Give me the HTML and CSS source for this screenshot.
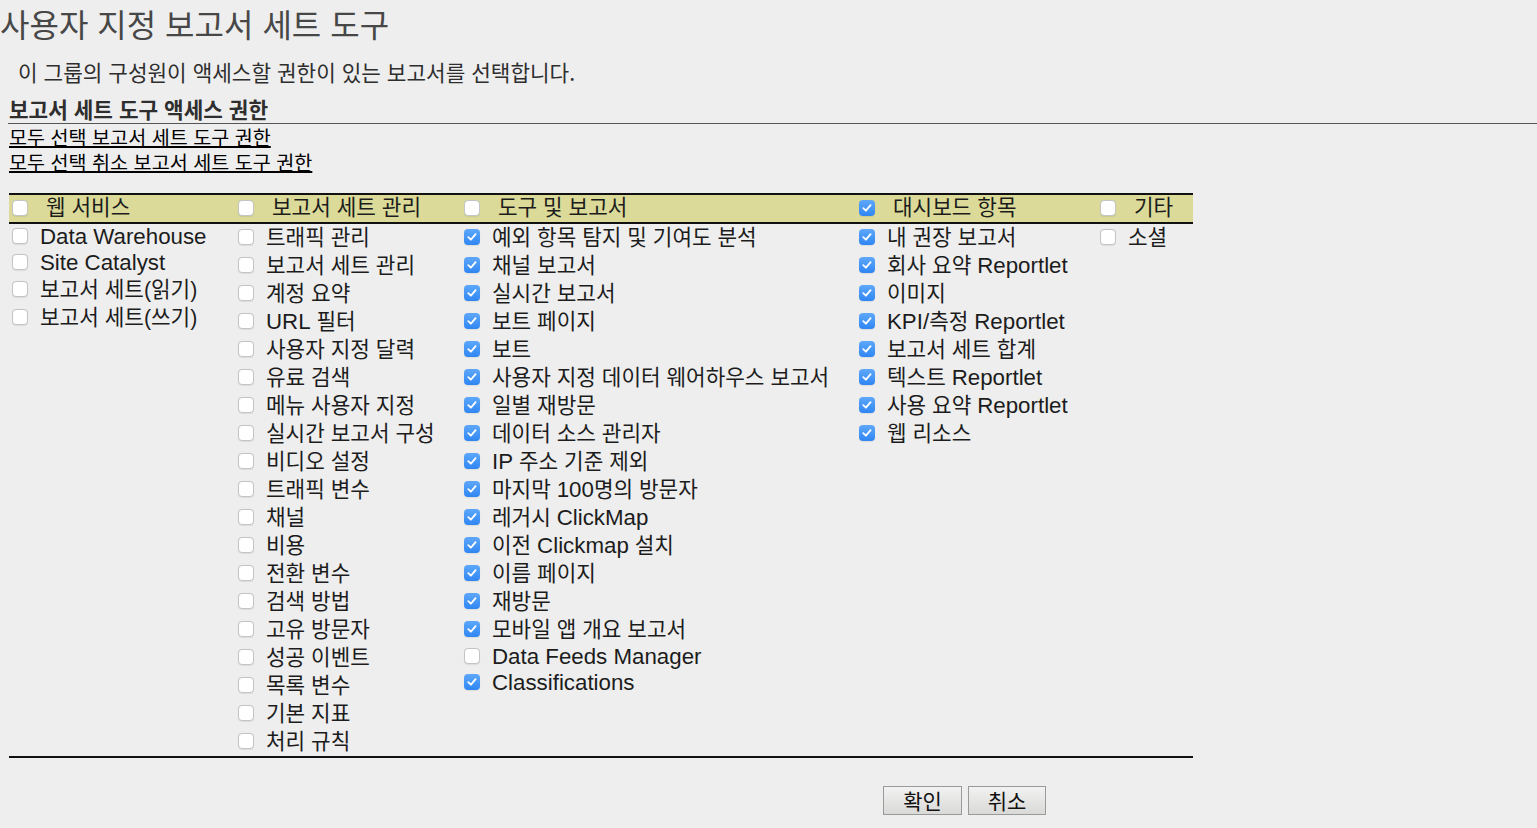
FILE: index.html
```html
<!DOCTYPE html>
<html lang="ko">
<head>
<meta charset="utf-8">
<title>사용자 지정 보고서 세트 도구</title>
<link rel="stylesheet" href="styles.css">
</head>
<body>
<h1 class="title">사용자 지정 보고서 세트 도구</h1>
<p class="intro">이 그룹의 구성원이 액세스할 권한이 있는 보고서를 선택합니다.</p>
<div class="section-head">보고서 세트 도구 액세스 권한</div>
<div class="links">
  <a href="#">모두 선택 보고서 세트 도구 권한</a>
  <a href="#">모두 선택 취소 보고서 세트 도구 권한</a>
</div>

<div class="perm-table">
  <div class="thead">
    <div class="hcell"><span class="cb"></span><span>웹 서비스</span></div>
    <div class="hcell"><span class="cb"></span><span>보고서 세트 관리</span></div>
    <div class="hcell"><span class="cb"></span><span>도구 및 보고서</span></div>
    <div class="hcell"><span class="cb on"><svg viewBox="0 0 16 16"><path d="M4.3 8.2 L6.9 10.7 L11.6 5.2"/></svg></span><span>대시보드 항목</span></div>
    <div class="hcell"><span class="cb"></span><span>기타</span></div>
  </div>
  <div class="tbody">
    <div class="col">
      <div class="item lat"><span class="cb"></span><span><span class="en">Data Warehouse</span></span></div>
      <div class="item lat"><span class="cb"></span><span><span class="en">Site Catalyst</span></span></div>
      <div class="item"><span class="cb"></span><span>보고서 세트(읽기)</span></div>
      <div class="item"><span class="cb"></span><span>보고서 세트(쓰기)</span></div>
    </div>
    <div class="col">
      <div class="item"><span class="cb"></span><span>트래픽 관리</span></div>
      <div class="item"><span class="cb"></span><span>보고서 세트 관리</span></div>
      <div class="item"><span class="cb"></span><span>계정 요약</span></div>
      <div class="item"><span class="cb"></span><span><span class="en">URL</span> 필터</span></div>
      <div class="item"><span class="cb"></span><span>사용자 지정 달력</span></div>
      <div class="item"><span class="cb"></span><span>유료 검색</span></div>
      <div class="item"><span class="cb"></span><span>메뉴 사용자 지정</span></div>
      <div class="item"><span class="cb"></span><span>실시간 보고서 구성</span></div>
      <div class="item"><span class="cb"></span><span>비디오 설정</span></div>
      <div class="item"><span class="cb"></span><span>트래픽 변수</span></div>
      <div class="item"><span class="cb"></span><span>채널</span></div>
      <div class="item"><span class="cb"></span><span>비용</span></div>
      <div class="item"><span class="cb"></span><span>전환 변수</span></div>
      <div class="item"><span class="cb"></span><span>검색 방법</span></div>
      <div class="item"><span class="cb"></span><span>고유 방문자</span></div>
      <div class="item"><span class="cb"></span><span>성공 이벤트</span></div>
      <div class="item"><span class="cb"></span><span>목록 변수</span></div>
      <div class="item"><span class="cb"></span><span>기본 지표</span></div>
      <div class="item"><span class="cb"></span><span>처리 규칙</span></div>
    </div>
    <div class="col">
      <div class="item"><span class="cb on"><svg viewBox="0 0 16 16"><path d="M4.3 8.2 L6.9 10.7 L11.6 5.2"/></svg></span><span>예외 항목 탐지 및 기여도 분석</span></div>
      <div class="item"><span class="cb on"><svg viewBox="0 0 16 16"><path d="M4.3 8.2 L6.9 10.7 L11.6 5.2"/></svg></span><span>채널 보고서</span></div>
      <div class="item"><span class="cb on"><svg viewBox="0 0 16 16"><path d="M4.3 8.2 L6.9 10.7 L11.6 5.2"/></svg></span><span>실시간 보고서</span></div>
      <div class="item"><span class="cb on"><svg viewBox="0 0 16 16"><path d="M4.3 8.2 L6.9 10.7 L11.6 5.2"/></svg></span><span>보트 페이지</span></div>
      <div class="item"><span class="cb on"><svg viewBox="0 0 16 16"><path d="M4.3 8.2 L6.9 10.7 L11.6 5.2"/></svg></span><span>보트</span></div>
      <div class="item"><span class="cb on"><svg viewBox="0 0 16 16"><path d="M4.3 8.2 L6.9 10.7 L11.6 5.2"/></svg></span><span>사용자 지정 데이터 웨어하우스 보고서</span></div>
      <div class="item"><span class="cb on"><svg viewBox="0 0 16 16"><path d="M4.3 8.2 L6.9 10.7 L11.6 5.2"/></svg></span><span>일별 재방문</span></div>
      <div class="item"><span class="cb on"><svg viewBox="0 0 16 16"><path d="M4.3 8.2 L6.9 10.7 L11.6 5.2"/></svg></span><span>데이터 소스 관리자</span></div>
      <div class="item"><span class="cb on"><svg viewBox="0 0 16 16"><path d="M4.3 8.2 L6.9 10.7 L11.6 5.2"/></svg></span><span><span class="en">IP</span> 주소 기준 제외</span></div>
      <div class="item"><span class="cb on"><svg viewBox="0 0 16 16"><path d="M4.3 8.2 L6.9 10.7 L11.6 5.2"/></svg></span><span>마지막 <span class="en">100</span>명의 방문자</span></div>
      <div class="item"><span class="cb on"><svg viewBox="0 0 16 16"><path d="M4.3 8.2 L6.9 10.7 L11.6 5.2"/></svg></span><span>레거시 <span class="en">ClickMap</span></span></div>
      <div class="item"><span class="cb on"><svg viewBox="0 0 16 16"><path d="M4.3 8.2 L6.9 10.7 L11.6 5.2"/></svg></span><span>이전 <span class="en">Clickmap</span> 설치</span></div>
      <div class="item"><span class="cb on"><svg viewBox="0 0 16 16"><path d="M4.3 8.2 L6.9 10.7 L11.6 5.2"/></svg></span><span>이름 페이지</span></div>
      <div class="item"><span class="cb on"><svg viewBox="0 0 16 16"><path d="M4.3 8.2 L6.9 10.7 L11.6 5.2"/></svg></span><span>재방문</span></div>
      <div class="item"><span class="cb on"><svg viewBox="0 0 16 16"><path d="M4.3 8.2 L6.9 10.7 L11.6 5.2"/></svg></span><span>모바일 앱 개요 보고서</span></div>
      <div class="item lat"><span class="cb"></span><span><span class="en">Data Feeds Manager</span></span></div>
      <div class="item lat"><span class="cb on"><svg viewBox="0 0 16 16"><path d="M4.3 8.2 L6.9 10.7 L11.6 5.2"/></svg></span><span><span class="en">Classifications</span></span></div>
    </div>
    <div class="col">
      <div class="item"><span class="cb on"><svg viewBox="0 0 16 16"><path d="M4.3 8.2 L6.9 10.7 L11.6 5.2"/></svg></span><span>내 권장 보고서</span></div>
      <div class="item"><span class="cb on"><svg viewBox="0 0 16 16"><path d="M4.3 8.2 L6.9 10.7 L11.6 5.2"/></svg></span><span>회사 요약 <span class="en">Reportlet</span></span></div>
      <div class="item"><span class="cb on"><svg viewBox="0 0 16 16"><path d="M4.3 8.2 L6.9 10.7 L11.6 5.2"/></svg></span><span>이미지</span></div>
      <div class="item"><span class="cb on"><svg viewBox="0 0 16 16"><path d="M4.3 8.2 L6.9 10.7 L11.6 5.2"/></svg></span><span><span class="en">KPI/</span>측정 <span class="en">Reportlet</span></span></div>
      <div class="item"><span class="cb on"><svg viewBox="0 0 16 16"><path d="M4.3 8.2 L6.9 10.7 L11.6 5.2"/></svg></span><span>보고서 세트 합계</span></div>
      <div class="item"><span class="cb on"><svg viewBox="0 0 16 16"><path d="M4.3 8.2 L6.9 10.7 L11.6 5.2"/></svg></span><span>텍스트 <span class="en">Reportlet</span></span></div>
      <div class="item"><span class="cb on"><svg viewBox="0 0 16 16"><path d="M4.3 8.2 L6.9 10.7 L11.6 5.2"/></svg></span><span>사용 요약 <span class="en">Reportlet</span></span></div>
      <div class="item"><span class="cb on"><svg viewBox="0 0 16 16"><path d="M4.3 8.2 L6.9 10.7 L11.6 5.2"/></svg></span><span>웹 리소스</span></div>
    </div>
    <div class="col">
      <div class="item"><span class="cb"></span><span>소셜</span></div>
    </div>
  </div>
</div>

<div class="actions">
  <button class="btn" type="button">확인</button>
  <button class="btn" type="button">취소</button>
</div>
</body>
</html>
```
FILE: styles.css
```css
html, body {
  margin: 0;
  padding: 0;
  background: #eeeeee;
}

body {
  font-family: "Liberation Sans", "Noto Sans CJK KR", sans-serif;
  font-size: 21.3px;
  color: #1c1c1c;
}

.en {
  font-size: 22.3px;
}

.title {
  margin: 0;
  font-family: "Noto Sans CJK KR", sans-serif;
  font-size: 32px;
  font-weight: 400;
  line-height: 46px;
  color: #474747;
  white-space: nowrap;
}

.intro {
  margin: 12px 0 0 18px;
  font-family: "Noto Sans CJK KR", sans-serif;
  font-size: 21.3px;
  line-height: 28px;
  color: #2e2e2e;
}

.section-head {
  margin: 9px 0 0 8px;
  padding-left: 1px;
  font-family: "Noto Sans CJK KR", sans-serif;
  font-size: 21.3px;
  font-weight: 700;
  line-height: 28px;
  color: #2e2e2e;
  border-bottom: 1px solid #555555;
}

.links {
  display: flex;
  flex-direction: column;
  align-items: flex-start;
  margin-left: 9px;
}

.links a {
  display: block;
  height: 25px;
  font-family: "Noto Sans CJK KR", sans-serif;
  font-size: 19.6px;
  line-height: 25px;
  color: #000000;
  text-decoration: underline;
  text-underline-offset: 1px;
  text-decoration-thickness: 2px;
}

.perm-table {
  width: 1184px;
  margin: 19px 0 0 9px;
  border-bottom: 2px solid #111111;
}

.thead,
.tbody {
  display: grid;
  grid-template-columns: 226px 226px 395px 241px 96px;
}

.thead {
  height: 27px;
  background: #dbda98;
  border-top: 2px solid #111111;
  border-bottom: 2px solid #111111;
}

.hcell {
  display: flex;
  align-items: center;
  gap: 18px;
  padding-left: 3px;
  line-height: 27px;
  white-space: nowrap;
}

.col {
  display: flex;
  flex-direction: column;
}

.item {
  display: flex;
  align-items: center;
  gap: 12px;
  height: 28px;
  padding-left: 3px;
  line-height: 28px;
  white-space: nowrap;
}

.item.lat {
  height: 26px;
}

.cb {
  flex: none;
  box-sizing: border-box;
  width: 16px;
  height: 16px;
  border: 1px solid #c4c4c4;
  border-radius: 4px;
  background: #ffffff;
  box-shadow: 0 0.5px 1px rgba(0, 0, 0, 0.08);
  position: relative;
  top: -1px;
}

.cb svg {
  display: block;
  width: 16px;
  height: 16px;
}

.cb svg path {
  fill: none;
  stroke: #ffffff;
  stroke-width: 1.8;
  stroke-linecap: round;
  stroke-linejoin: round;
}

.cb.on {
  border: none;
  background: linear-gradient(#5ea8fa, #2f86f3);
}

.actions {
  display: flex;
  gap: 6px;
  margin: 28px 0 0 883px;
}

.btn {
  box-sizing: border-box;
  width: 79px;
  height: 29px;
  padding: 0;
  border: 1px solid #9a9a9a;
  border-radius: 0;
  background: linear-gradient(#f2f2f2, #d9d9d7);
  font-family: "Noto Sans CJK KR", sans-serif;
  font-size: 21px;
  line-height: 27px;
  color: #111111;
}

.btn + .btn {
  width: 78px;
}
```
